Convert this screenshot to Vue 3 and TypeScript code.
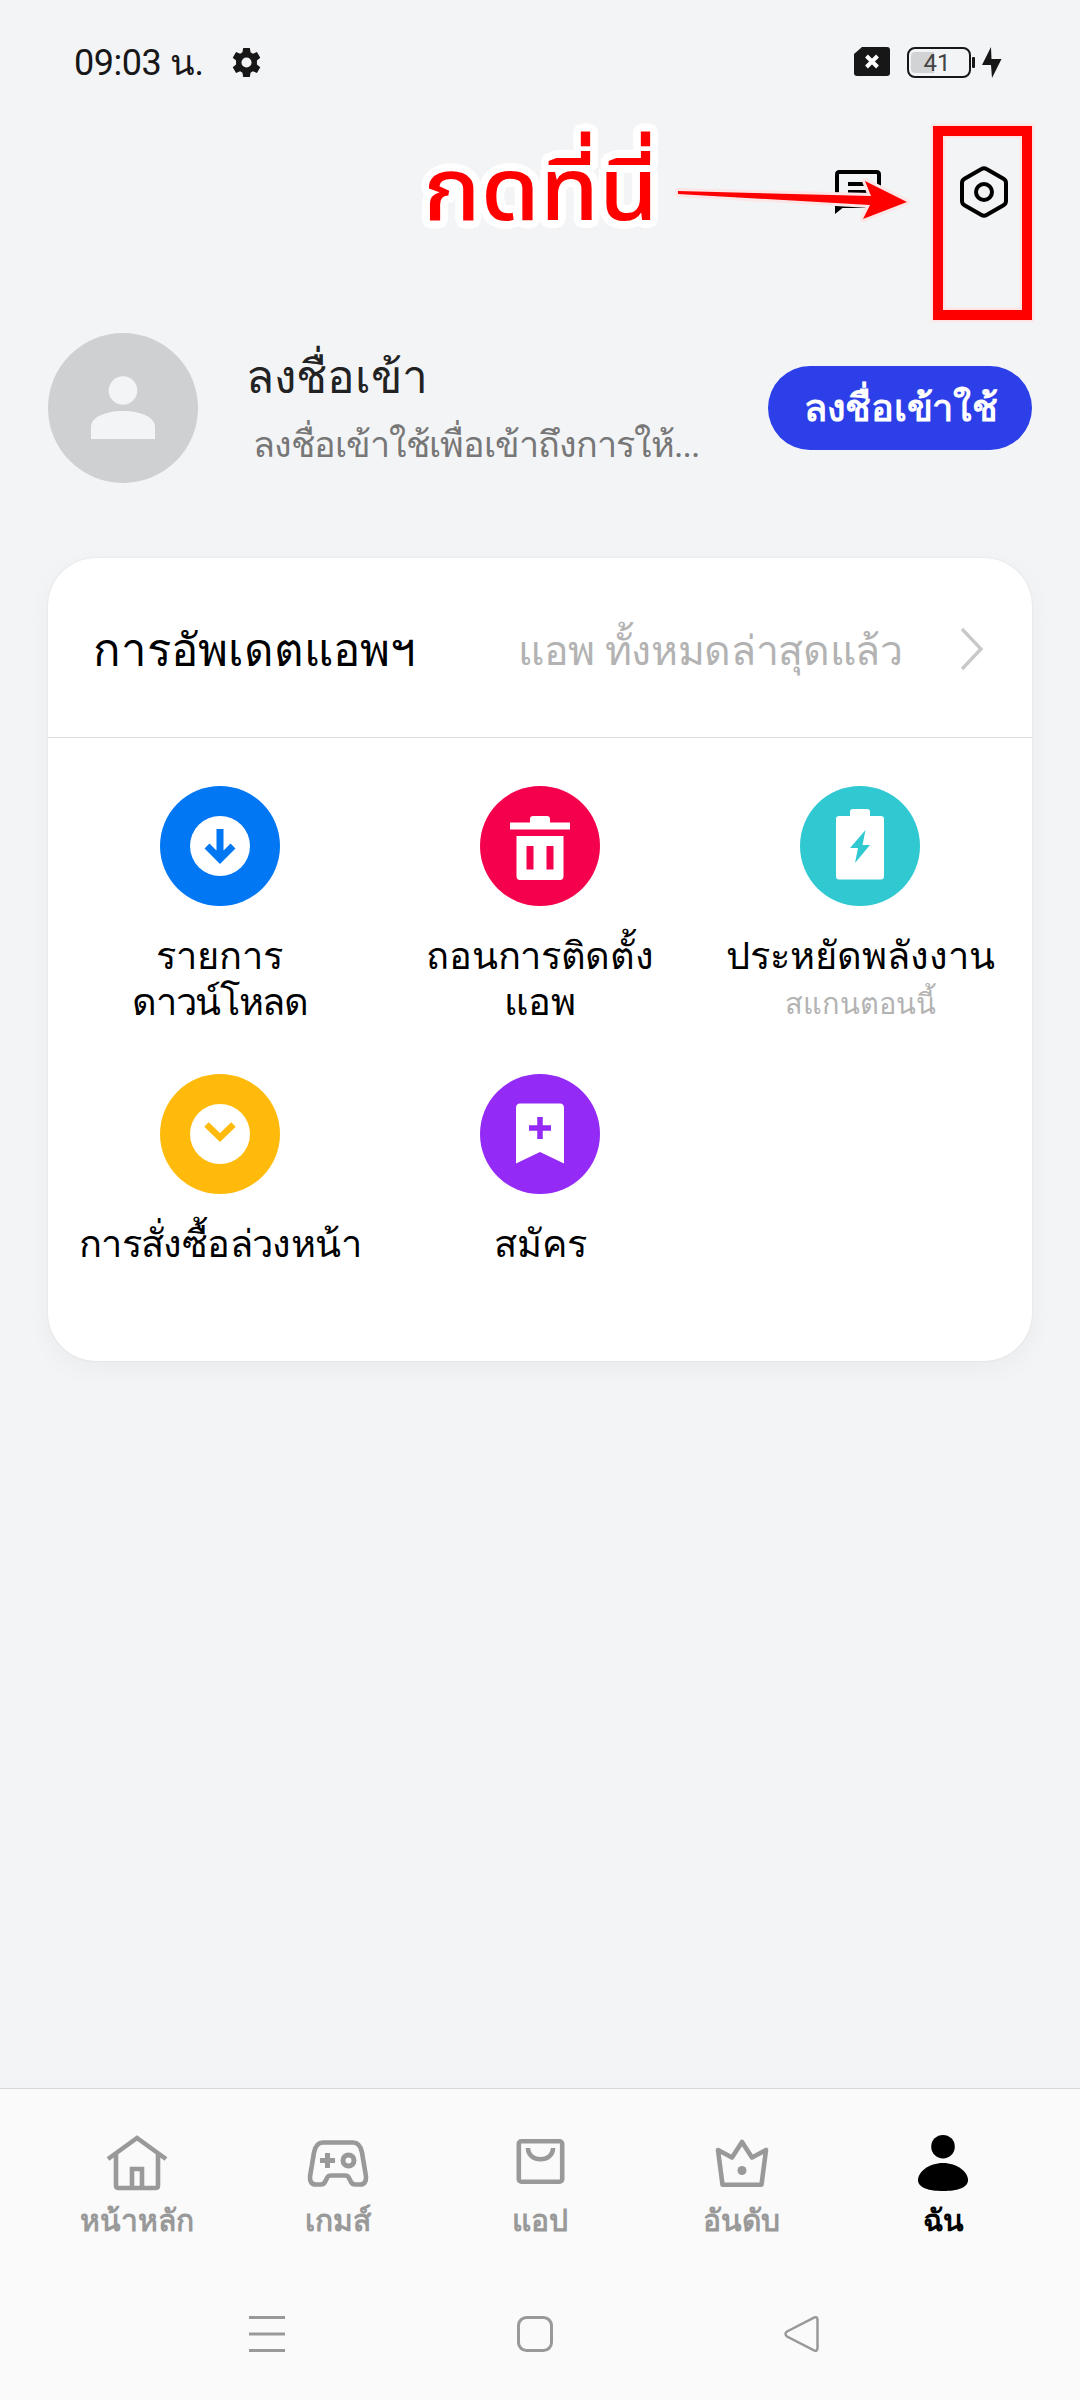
<script setup lang="ts">
interface Line { text: string; track?: number }
interface Shortcut { id: string; color: string; lines: Line[]; hint?: string }

const shortcuts: Shortcut[] = [
  { id: 'download', color: '#0277f3', lines: [{ text: 'รายการ' }, { text: 'ดาวน์โหลด', track: -1.3 }] },
  { id: 'trash', color: '#f4004c', lines: [{ text: 'ถอนการติดตั้ง', track: -0.3 }, { text: 'แอพ' }] },
  { id: 'battery', color: '#30c9d1', lines: [{ text: 'ประหยัดพลังงาน' }], hint: 'สแกนตอนนี้' },
  { id: 'preorder', color: '#ffba0c', lines: [{ text: 'การสั่งซื้อล่วงหน้า', track: -0.6 }] },
  { id: 'subscribe', color: '#942af5', lines: [{ text: 'สมัคร' }] },
]
const tabs = [
  { id: 'home', label: 'หน้าหลัก' },
  { id: 'games', label: 'เกมส์' },
  { id: 'apps', label: 'แอป' },
  { id: 'rank', label: 'อันดับ' },
  { id: 'me', label: 'ฉัน' },
]
</script>

<template>
  <main class="screen">
    <header class="status">
      <span class="time">09:03 น.</span>
      <svg class="gear" viewBox="2 2 20 20"><path fill-rule="evenodd" d="M9.700 2h4.600l.5 3 1.600.9 2.800-1.100 2.300 4-2.300 1.900v2.600l2.300 1.900-2.300 4-2.800-1.100-1.600.9-.5 3H9.700l-.5-3-1.600-.9-2.800 1.100-2.300-4 2.300-1.900v-2.600L2.500 8.800l2.300-4 2.800 1.100 1.600-.9zM12 15.500a3.500 3.500 0 1 0 0-7 3.500 3.500 0 0 0 0 7z" /></svg>
      <svg class="sim" width="36" height="29" viewBox="0 0 36 29"><path d="M8 0H33a3 3 0 0 1 3 3V26a3 3 0 0 1-3 3H3a3 3 0 0 1-3-3V7z" fill="#171717" /><path d="M12.500 9l11 11M23.500 9l-11 11" stroke="#fff" stroke-width="4" /></svg>
      <span class="battery"><i /><b>41</b></span><span class="cap" />
      <svg class="bolt" width="20" height="31" viewBox="0 0 20 31"><path d="M9 0L0 18h9l1 13L19.500 12H9.500z" fill="#171717" /></svg>
    </header>

    <section class="toolbar">
      <svg class="chat" width="46" height="44" viewBox="0 0 46 44"><path d="M2 40V4.500Q2 2 4.500 2h37Q44 2 44 4.500V36H7" fill="none" stroke="#000" stroke-width="4" /><path d="M0 44V32h15zM13 12h20v4H13zM13 20h20v4H13z" /></svg>
      <svg class="hex" width="48" height="52" viewBox="0 0 48 52"><path d="M21.500 3Q24 1.400 26.500 3L43.500 12.800Q46 14.300 46 17V35Q46 37.700 43.500 39.200L26.500 49Q24 50.600 21.500 49L4.500 39.200Q2 37.700 2 35V17Q2 14.300 4.500 12.800z" fill="none" stroke="#000" stroke-width="4" /><circle cx="24" cy="26" r="8" fill="none" stroke="#000" stroke-width="4" /></svg>
      <div class="note">กดที่นี่</div>
      <svg class="arrow" width="244" height="54" viewBox="0 0 244 54"><path d="M8 16L201 21 195 6 237 27 193 44 200 30 8 19z" fill="#f00" stroke="#fbe6e7" stroke-width="6" stroke-linejoin="round" paint-order="stroke" /></svg>
      <div class="frame" />
    </section>

    <section class="profile">
      <svg width="150" height="150" viewBox="0 0 150 150"><circle cx="75" cy="75" r="75" fill="#cfd0d2" /><circle cx="75" cy="57.500" r="14.300" fill="#f3f4f6" /><path d="M43 106V94C43 84 58 78 75 78s32 6 32 16v12z" fill="#f3f4f6" /></svg>
      <div class="who"><h1>ลงชื่อเข้า</h1><p>ลงชื่อเข้าใช้เพื่อเข้าถึงการให้...</p></div>
      <button class="login"><span>ลงชื่อเข้าใช้</span></button>
    </section>

    <section class="card">
      <div class="update">
        <h2>การอัพเดตแอพฯ</h2><span>แอพ ทั้งหมดล่าสุดแล้ว</span>
        <svg width="24" height="44" viewBox="0 0 24 44"><path d="M2 2L21 22 2 42" fill="none" stroke="#c8c8c8" stroke-width="3.300" /></svg>
      </div>
      <div class="grid">
        <div v-for="s in shortcuts" :key="s.id" class="cell">
          <svg width="120" height="120" viewBox="0 0 120 120">
            <circle cx="60" cy="60" r="60" :fill="s.color" />
            <g v-if="s.id === 'download'"><circle cx="60" cy="60" r="30" fill="#fff" /><path d="M60 43V72M47 60l13 13 13-13" fill="none" :stroke="s.color" stroke-width="7" /></g>
            <g v-else-if="s.id === 'trash'" fill="#fff"><path d="M30 36.500H50V33Q50 30 53 30H67Q70 30 70 33V36.500H90V43.500H30z" /><path fill-rule="evenodd" d="M36.500 50H83.500V90Q83.500 94 80 94H40Q36.500 94 36.500 90zM46.500 60V83.500H53.500V60zM66.500 60V83.500H73.500V60z" /></g>
            <g v-else-if="s.id === 'battery'"><path d="M50 30V26Q50 23 53 23H67Q70 23 70 26V30H81Q84 30 84 33V90Q84 93.500 81 93.500H39Q36 93.500 36 90V33Q36 30 39 30z" fill="#fff" /><path d="M65.500 44L50 62H58L55 77 70 59H62.500z" :fill="s.color" /></g>
            <g v-else-if="s.id === 'preorder'"><circle cx="60" cy="60" r="30" fill="#fff" /><path d="M46.500 50.500L60 63.500 73.500 50.500" fill="none" :stroke="s.color" stroke-width="6.500" /></g>
            <g v-else><path d="M40 29.500H80Q84 29.500 84 34V89.500L60 78 36 89.500V34Q36 29.500 40 29.500z" fill="#fff" /><path d="M60 43V65M49 54H71" :stroke="s.color" stroke-width="5.500" /></g>
          </svg>
          <p><span v-for="l in s.lines" :key="l.text" :style="{ letterSpacing: (l.track ?? 0) + 'px' }">{{ l.text }}</span></p>
          <small v-if="s.hint">{{ s.hint }}</small>
        </div>
      </div>
    </section>

    <footer>
      <nav class="tabs">
        <div v-for="t in tabs" :key="t.id" class="tab" :class="t.id">
          <svg width="64" height="64" viewBox="0 0 64 64" fill="none" stroke="#999" stroke-width="4.600">
            <path v-if="t.id === 'home'" d="M3 29L32 8 61 29M11 24V55.500Q11 58 13.500 58H50.500Q53 58 53 55.500V24M27 58V39H37V58" />
            <template v-else-if="t.id === 'games'"><path d="M17 12.500H47Q54 12.500 56 22.500L60 46.500Q60.500 54.500 54 54.500H49Q46 54.500 44.500 51L43 48Q42 45.500 39 45.500H25Q22 45.500 21 48L19.500 51Q18 54.500 15 54.500H10Q3.500 54.500 4 46.500L8 22.500Q10 12.500 17 12.500z" /><path d="M14 30.500H29M21.500 23V38" stroke-width="5" /><circle cx="42.500" cy="30.500" r="5.500" stroke-width="5" /></template>
            <template v-else-if="t.id === 'apps'"><rect x="10.800" y="11.300" width="43.400" height="40.400" rx="2.500" /><path d="M20 18C20 33 45 33 45 18" /></template>
            <template v-else-if="t.id === 'rank'"><path d="M8 20L22 27.500 32 12 42 27.500 56 20 51.500 54.700H12.500z" stroke-linejoin="round" /><circle cx="32" cy="40.500" r="4.500" fill="#999" stroke="none" /></template>
            <template v-else><circle cx="32" cy="16.700" r="11.800" fill="#000" stroke="none" /><path d="M32 33C46 33 57 42 57 50S46 61 32 61 7 58 7 50 18 33 32 33z" fill="#000" stroke="none" /></template>
          </svg>
          <span>{{ t.label }}</span>
        </div>
      </nav>
      <div class="system">
        <svg width="36" height="36" viewBox="0 0 36 36"><path d="M0 1.500H36M0 18H36M0 34.500H36" /></svg>
        <svg width="36" height="36" viewBox="0 0 36 36"><rect x="1.500" y="1.500" width="33" height="33" rx="8" /></svg>
        <svg width="36" height="36" viewBox="0 0 36 36"><path d="M3 15.500L29.500 1.800Q33.500 0 33.500 4V32Q33.500 36 29.500 34.200L3 20.500Q0 18 3 15.500z" stroke-width="2.500" /></svg>
      </div>
    </footer>
  </main>
</template>

<style>
body { background: #f3f4f6; }
</style>
<style scoped>
* { box-sizing: border-box; }
.screen { width: 1080px; height: 2400px; display: flex; flex-direction: column; background: #f3f4f6; font-family: Roboto, "Noto Sans", sans-serif; color: #000; overflow: hidden; }
h1, h2, p { margin: 0; font-weight: 400; }
svg { display: block; flex: none; }
span, h1, h2, p { white-space: nowrap; }
.status { height: 126px; display: flex; align-items: flex-start; padding: 47px 78px 0 74px; color: #171717; }
.time { font-size: 36px; line-height: 42px; width: 158px; margin-top: -5px; letter-spacing: -.45px; }
.gear { width: 29px; height: 31px; fill: #171717; }
.sim { margin-left: auto; }
.battery { position: relative; width: 64px; height: 31px; margin-left: 17px; border: 2.500px solid #171717; border-radius: 8px; display: flex; justify-content: center; align-items: center; }
.battery i { position: absolute; left: 2px; top: 3px; width: 23px; height: 21px; border-radius: 4px 0 0 4px; background: #d2d3d5; }
.battery b { position: relative; font-size: 24px; font-weight: 400; line-height: 26px; color: #444; left: -2px; }
.cap { width: 3px; height: 11px; margin: 10px 7px 0 1px; background: #171717; border-radius: 1px; }
.toolbar { position: relative; height: 207px; padding: 40px 72px 0 835px; display: flex; justify-content: space-between; align-items: flex-start; }
.chat { margin-top: 4px; }
.note { position: absolute; left: 423px; top: 3px; font-family: "Noto Sans Thai", "Noto Sans", sans-serif; font-size: 87px; font-weight: 500; line-height: 130px; white-space: nowrap; color: #f00; transform: scaleX(1.095); transform-origin: left; text-shadow: 7px 0 #fff, -7px 0 #fff, 0 8px #fff, 0 -8px #fff, 5px 5.500px #fff, -5px 5.500px #fff, 5px -5.500px #fff, -5px -5.500px #fff, 6.500px 3px #fff, 6.500px -3px #fff, -6.500px 3px #fff, -6.500px -3px #fff, 2.700px 7.300px #fff, -2.700px 7.300px #fff, 2.700px -7.300px #fff, -2.700px -7.300px #fff; }
.arrow { position: absolute; left: 670px; top: 49px; }
.frame { position: absolute; left: 933px; top: 0; width: 99px; height: 194px; border: 10px solid #f00; box-shadow: 0 0 2px 2px #fde2e3, inset 0 0 2px 2px #fde2e3; }
.profile { height: 150px; margin: 0 48px; display: flex; align-items: flex-start; }
.who { margin-left: 48px; width: 522px; }
.who h1 { font-size: 46px; line-height: 60px; margin-top: 14px; color: #222; }
.who p { font-size: 36px; line-height: 50px; margin: 13px 0 0 7px; color: #777; letter-spacing: -1px; }
.login { width: 264px; height: 84px; margin-top: 33px; padding: 0 36px; border: 0; border-radius: 42px; background: #2d3fe8; color: #fff; font: 700 38px/84px Roboto, "Noto Sans", sans-serif; letter-spacing: -.3px; text-align: left; }
.card { height: 803px; margin: 75px 48px 0; border-radius: 48px; background: #fff; box-shadow: 0 0 2px rgba(0, 0, 0, .1), 0 8px 26px rgba(0, 0, 0, .04); }
.update { height: 180px; display: flex; align-items: center; border-bottom: 1px solid #dcdfdf; padding: 5px 46px 0 45px; }
.update h2 { font-size: 45.500px; line-height: 60px; width: 425px; padding-top: 2px; }
.update span { font-size: 41px; line-height: 60px; width: 442px; padding-top: 1px; color: #b3b3b3; letter-spacing: -.35px; }
.update svg { margin-top: -2px; }
.grid { display: grid; grid-template-columns: repeat(3, 320px); justify-content: center; grid-template-rows: 288px 288px; padding-top: 48px; }
.cell { display: flex; flex-direction: column; align-items: center; }
.cell p { display: flex; flex-direction: column; align-items: center; margin-top: 27px; font-size: 38px; line-height: 46px; }
.cell small { margin-top: 2px; font-size: 29px; line-height: 46px; color: #b3b3b3; white-space: nowrap; }
footer { margin-top: auto; height: 312px; border-top: 1px solid #d9d9d9; background: #fafafa; }
.tabs { display: grid; grid-template-columns: repeat(5, 201.600px); padding: 41px 36px 0; }
.tab { display: flex; flex-direction: column; align-items: center; font-size: 30px; font-weight: 700; line-height: 40px; color: #999; }
.tab span { margin-top: 7px; }
.tab.me { color: #000; }
.system { display: flex; justify-content: space-between; margin-top: 75px; padding: 0 260px 0 249px; }
.system svg { fill: none; stroke: #999; stroke-width: 3; }
</style>
